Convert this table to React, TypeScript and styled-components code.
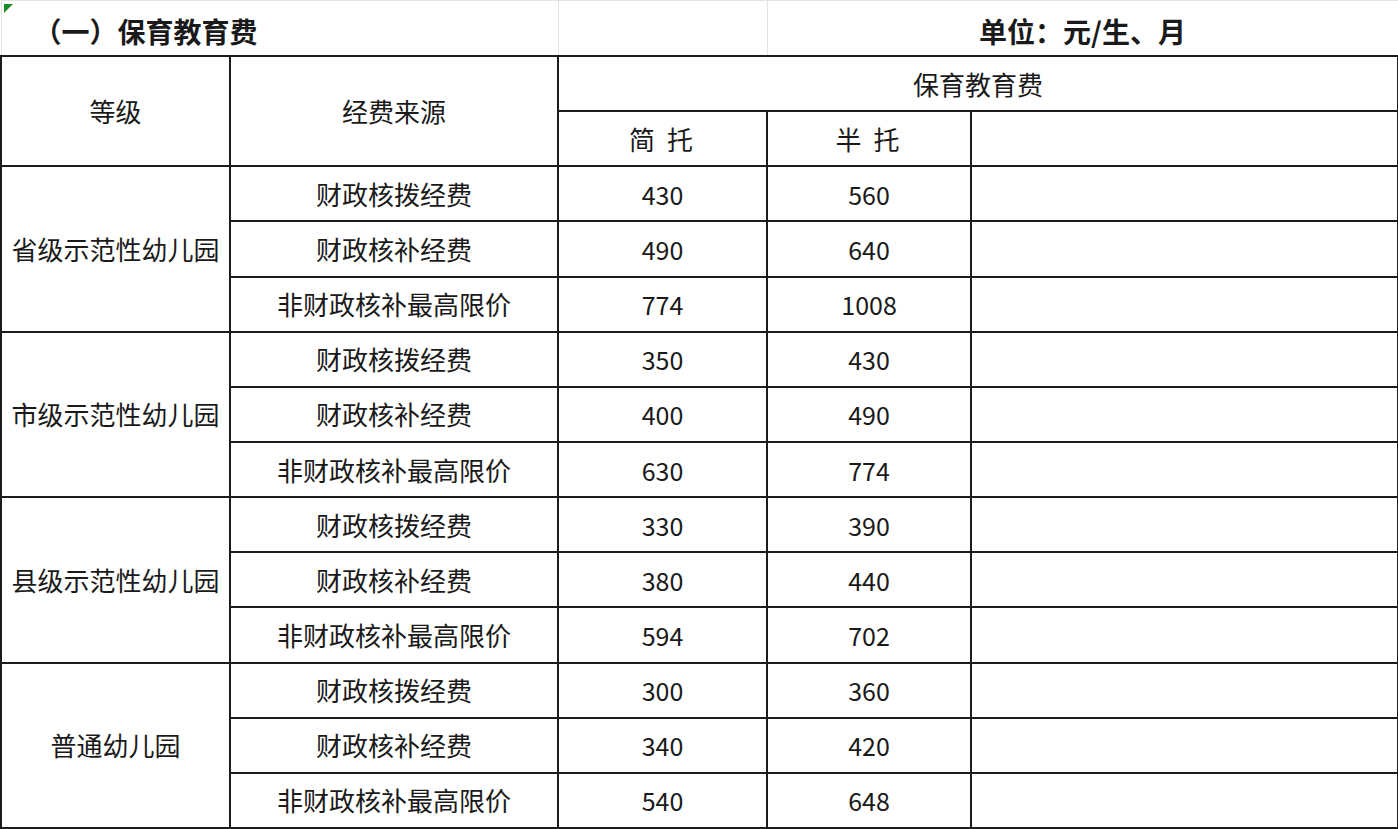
import React from "react"
import styled, { createGlobalStyle } from "styled-components"

/*==================== Data ====================*/

const sources = ["财政核拨经费", "财政核补经费", "非财政核补最高限价"]

const levels = [
    { name: "省级示范性幼儿园", fees: [[430, 560], [490, 640], [774, 1008]] },
    { name: "市级示范性幼儿园", fees: [[350, 430], [400, 490], [630, 774]] },
    { name: "县级示范性幼儿园", fees: [[330, 390], [380, 440], [594, 702]] },
    { name: "普通幼儿园", fees: [[300, 360], [340, 420], [540, 648]] },
]

/*==================== Styles ====================*/

const GlobalStyle = createGlobalStyle`
    html, body {
        margin: 0;
        padding: 0;
        background: #ffffff;
    }

    body {
        font-family: "Noto Sans CJK SC", "Noto Sans", sans-serif;
        color: #1a1a1a;
    }
`

const Sheet = styled.table`
    width: 1397px;
    table-layout: fixed;
    border-collapse: collapse;
`

const TitleCell = styled.td<{ $align?: "left" | "center" }>`
    position: relative;
    height: 52px;
    padding: 0 0 2px 0;
    border: 1px solid #e2e2e2;
    border-bottom: none;
    vertical-align: bottom;
    text-align: ${({ $align }) => $align || "center"};
    font-size: 28px;
    font-weight: 700;
    line-height: 44px;
`

const TitleText = styled.span`
    padding-left: 32px;
`

const Marker = styled.span`
    position: absolute;
    top: 3px;
    left: 2px;
    width: 0;
    height: 0;
    border-top: 9px solid #1a8c2a;
    border-right: 9px solid transparent;
`

const Cell = styled.td<{ $spaced?: boolean }>`
    height: 53.15px;
    padding: 0;
    border: 2px solid #1c1c1c;
    text-align: center;
    vertical-align: middle;
    font-size: 26px;
    line-height: 30px;
    letter-spacing: ${({ $spaced }) => ($spaced ? "3px" : "0")};
    white-space: nowrap;
`

const Num = styled(Cell)`
    font-size: 25px;
`

/*==================== Component ====================*/

const App = () => (
    <>
        <GlobalStyle />
        <Sheet>
            <colgroup>
                <col style={{ width: 229 }} />
                <col style={{ width: 328 }} />
                <col style={{ width: 209 }} />
                <col style={{ width: 204 }} />
                <col style={{ width: 427 }} />
            </colgroup>
            <tbody>
                <tr>
                    <TitleCell colSpan={2} $align="left">
                        <Marker />
                        <TitleText>（一）保育教育费</TitleText>
                    </TitleCell>
                    <TitleCell />
                    <TitleCell colSpan={2}>单位：元/生、月</TitleCell>
                </tr>
                <tr>
                    <Cell rowSpan={2}>等级</Cell>
                    <Cell rowSpan={2}>经费来源</Cell>
                    <Cell colSpan={3}>保育教育费</Cell>
                </tr>
                <tr>
                    <Cell $spaced>简 托</Cell>
                    <Cell $spaced>半 托</Cell>
                    <Cell />
                </tr>
                {levels.map(level =>
                    level.fees.map(([simple, half], i) => (
                        <tr key={level.name + i}>
                            {i === 0 && <Cell rowSpan={3}>{level.name}</Cell>}
                            <Cell>{sources[i]}</Cell>
                            <Num>{simple}</Num>
                            <Num>{half}</Num>
                            <Cell />
                        </tr>
                    ))
                )}
            </tbody>
        </Sheet>
    </>
)

export default App
